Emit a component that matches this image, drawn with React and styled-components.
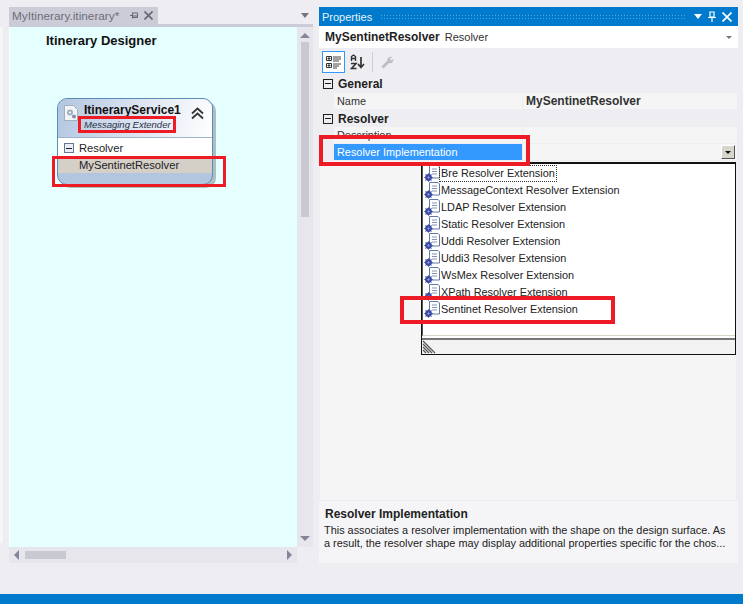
import React from 'react'
import styled, { createGlobalStyle } from 'styled-components'

const GlobalStyle = createGlobalStyle`
  html, body {
    margin: 0;
    padding: 0;
    background: #eeeef2;
    font-family: 'Liberation Sans', Arial, sans-serif;
    font-size: 10.9px;
    color: #1e1e1e;
    overflow: hidden;
  }
`

const Page = styled.div`
  position: relative;
  width: 743px;
  height: 604px;
  display: flex;
  flex-direction: column;
  overflow: hidden;
`

const Workspace = styled.div`
  flex: 1;
  display: flex;
  padding-top: 7px;
`

const EdgeStrip = styled.div`
  width: 3px;
  height: 516px;
  margin: 20px 6px 0 0;
  background: #f6f6f6;
`

const DesignerPane = styled.section`
  width: 304px;
  height: 556px;
  margin-right: 6px;
  display: flex;
  flex-direction: column;
`

const TabRow = styled.div`
  height: 17px;
  display: flex;
  align-items: center;
  justify-content: space-between;
  flex: none;
`

const Tab = styled.div`
  width: 149px;
  height: 17px;
  padding: 0 5px 0 3px;
  box-sizing: border-box;
  background: #ccccd8;
  color: #6d6d7a;
  font-size: 11.8px;
  display: flex;
  align-items: center;
  justify-content: space-between;
`

const TabActions = styled.span`
  display: flex;
  align-items: center;
  gap: 6px;
`

const TabLine = styled.div`
  height: 3px;
  background: #ccccd8;
  flex: none;
`

const DesignerBody = styled.div`
  display: grid;
  grid-template-columns: 288px 16px;
  grid-template-rows: 520px 16px;
`

const Canvas = styled.div`
  background: #e6ffff;
  border-left: 1px solid #f7ffff;
  padding: 6px 0 0 36px;
`

const CanvasTitle = styled.div`
  font-size: 13px;
  font-weight: 700;
  color: #111;
  height: 16px;
  line-height: 16px;
`

const Node = styled.div`
  width: 154px;
  height: 85px;
  margin: 49px 0 0 11px;
  border: 1px solid #5b8db8;
  border-radius: 10px;
  box-shadow: 3px 3px 0 #aebfc0;
  background: #b2c6e0;
  overflow: hidden;
  display: flex;
  flex-direction: column;
`

const NodeHead = styled.div`
  height: 38px;
  flex: none;
  display: flex;
  background: linear-gradient(105deg, #b2c6e0 0%, #dfe6f2 55%, #ffffff 100%);
  border-bottom: 1px solid #9fb4cc;
  position: relative;
`

const NodeIcon = styled.span`
  width: 14px;
  height: 16px;
  margin: 6px 6px 0 6px;
  flex: none;
`

const NodeText = styled.div`
  display: flex;
  flex-direction: column;
  padding-top: 4px;
`

const NodeName = styled.div`
  font-weight: 700;
  font-size: 12px;
  line-height: 14px;
  color: #111;
  white-space: nowrap;
`

const NodeKind = styled.div`
  font-style: italic;
  font-size: 9.5px;
  line-height: 11px;
  margin-top: 2px;
  color: #1f3044;
  white-space: nowrap;
`

const Collapse = styled.svg`
  width: 13px;
  height: 13px;
  position: absolute;
  top: 8px;
  right: 8px;
`

const NodeSection = styled.div`
  height: 20px;
  flex: none;
  background: #fff;
  display: flex;
  align-items: center;
  gap: 5px;
  padding-left: 6px;
  font-size: 11.2px;
`

const NodeItem = styled.div`
  height: 15px;
  flex: none;
  background: #d4d0c8;
  padding-left: 21px;
  line-height: 15px;
  font-size: 11.2px;
  color: #222;
`

const ExpandBox = styled.span`
  width: 8px;
  height: 8px;
  flex: none;
  border: 1px solid ${({ $dark }) => ($dark ? '#1e1e1e' : '#67788c')};
  background: ${({ $dark }) => ($dark ? 'transparent' : '#e7edf4')};
  position: relative;

  &::after {
    content: '';
    position: absolute;
    left: 1px;
    right: 1px;
    top: 3.5px;
    height: 1px;
    background: #1e1e1e;
  }
`

const ScrollBar = styled.div`
  background: #e6e6ec;
  display: flex;
  flex-direction: ${({ $horizontal }) => ($horizontal ? 'row' : 'column')};
  align-items: ${({ $horizontal }) => ($horizontal ? 'center' : 'stretch')};
  justify-content: space-between;
  position: relative;
`

const Thumb = styled.div`
  background: #c9c9d2;
  ${({ $horizontal }) =>
    $horizontal
      ? 'position: absolute; left: 16px; top: 4px; width: 41px; height: 8px;'
      : 'position: absolute; left: 4px; top: 15px; width: 8px; height: 175px;'}
`

const Arrow = styled.span`
  width: 0;
  height: 0;
  flex: none;
  border-style: solid;
  border-color: transparent;
  ${({ $dir }) => ($dir === 'up' ? 'border-width: 0 5px 5px; border-bottom-color: #85859a; margin: 6px 3px 0;' : '')}
  ${({ $dir }) => ($dir === 'down' ? 'border-width: 5px 5px 0; border-top-color: #85859a; margin: 0 3px 6px;' : '')}
  ${({ $dir }) => ($dir === 'left' ? 'border-width: 5px 5px 5px 0; border-right-color: #85859a; margin-left: 5px;' : '')}
  ${({ $dir }) => ($dir === 'right' ? 'border-width: 5px 0 5px 5px; border-left-color: #85859a; margin-right: 5px;' : '')}
`

const Corner = styled.div``

const PropertiesPane = styled.section`
  width: 419px;
  height: 556px;
  display: flex;
  flex-direction: column;
`

const TitleBar = styled.header`
  height: 19px;
  flex: none;
  background: #007acc;
  color: #e8f2fa;
  display: flex;
  align-items: center;
  padding: 0 6px 0 3px;
  gap: 8px;
  font-size: 11px;
`

const Grip = styled.div`
  flex: 1;
  height: 5px;
  background-image: radial-gradient(#5aa8de 0.7px, transparent 0.8px);
  background-size: 3px 3px;
`

const TitleIcons = styled.div`
  display: flex;
  align-items: center;
  gap: 6px;
`

const ObjectRow = styled.div`
  height: 22px;
  flex: none;
  background: #fff;
  display: flex;
  align-items: center;
  gap: 5px;
  padding: 0 6px;
  font-size: 11px;
  position: relative;

  b {
    color: #1e1e1e;
    font-size: 12px;
  }

  span {
    color: #333;
  }

  &::after {
    content: '';
    position: absolute;
    right: 6px;
    top: 10px;
    border-style: solid;
    border-width: 3px 3px 0;
    border-color: #777 transparent transparent;
  }
`

const Toolbar = styled.div`
  height: 27px;
  flex: none;
  display: flex;
  align-items: center;
  padding-left: 3px;
  gap: 2px;
`

const ToolButton = styled.span`
  width: ${({ $active }) => ($active ? '23px' : '21px')};
  height: 22px;
  box-sizing: border-box;
  display: flex;
  align-items: center;
  justify-content: center;
  border: 1px solid ${({ $active }) => ($active ? '#3399ff' : 'transparent')};
  background: ${({ $active }) => ($active ? '#fff' : 'transparent')};
`

const ToolDivider = styled.span`
  width: 1px;
  height: 20px;
  margin: 0 2px;
  background: #ccced8;
`

const Grid = styled.div`
  flex: 1;
  display: flex;
  flex-direction: column;
`

const CategoryRow = styled.div`
  height: 17px;
  flex: none;
  display: flex;
  align-items: center;
  gap: 5px;
  padding-left: 4px;
  margin-bottom: ${({ $spaced }) => ($spaced ? '1px' : '0')};
  font-weight: 700;
  font-size: 12px;
  color: #1e1e1e;
`

const PropRow = styled.div`
  height: 16px;
  flex: none;
  margin: 0 1px 1px 15px;
  display: grid;
  grid-template-columns: 188px 1fr;
  column-gap: 1px;
`

const PropName = styled.div`
  padding-left: 3px;
  line-height: 16px;
  background: ${({ $selected }) => ($selected ? '#3399ff' : '#f5f5f5')};
  color: ${({ $selected }) => ($selected ? '#fff' : '#333')};
`

const PropValue = styled.div`
  padding-left: 3px;
  line-height: 16px;
  background: #f5f5f5;
  font-weight: ${({ $bold }) => ($bold ? 700 : 400)};
  font-size: ${({ $bold }) => ($bold ? '12px' : 'inherit')};
  color: #333;
  position: relative;
`

const ComboButton = styled.span`
  position: absolute;
  right: 2px;
  top: 1px;
  width: 14px;
  height: 14px;
  box-sizing: border-box;
  background: #d8d5cc;
  border: 1px solid;
  border-color: #fff #555 #555 #fff;

  &::after {
    content: '';
    position: absolute;
    left: 3px;
    top: 5px;
    border-style: solid;
    border-width: 3px 3px 0;
    border-color: #111 transparent transparent;
  }
`

const EmptyGrid = styled.div`
  flex: 1;
  margin: 0 2px 1px 1px;
  background: #f5f5f5;
`

const HelpBox = styled.div`
  height: 62px;
  flex: none;
  background: #f5f5f7;
  box-sizing: border-box;
  padding: 6px 5px 0 5px;
  line-height: 13px;
  color: #222;
`

const HelpTitle = styled.div`
  font-weight: 700;
  font-size: 12px;
  margin: 0 0 3px 1px;
  line-height: 14px;
`

const HelpLine = styled.div`
  white-space: nowrap;
`

const Dropdown = styled.div`
  position: absolute;
  left: 421px;
  top: 162px;
  width: 315px;
  height: 193px;
  box-sizing: border-box;
  border: 1px solid #111;
  border-top-width: 2px;
  background: #fff;
  display: flex;
  flex-direction: column;
`

const DropList = styled.div`
  height: 170px;
  flex: none;
  padding: 1px 0 0 1px;
  border-left: 1px solid #555;
  border-bottom: 1px solid #d8d5c8;
`

const DropItem = styled.div`
  height: 17px;
  display: flex;
  align-items: center;
  color: #222;
`

const DropLabel = styled.span`
  padding: 0 1px;
  line-height: 15px;
  outline: ${({ $focused }) => ($focused ? '1px dotted #333' : 'none')};
`

const DropFooter = styled.div`
  flex: 1;
  margin-top: 2px;
  border-top: 2px solid #777;
  background: #f3f3f3;
`

const Redbox = styled.div`
  position: absolute;
  box-sizing: border-box;
  border: ${({ $thick }) => ($thick ? '4px' : '3px')} solid #ed1c24;
  pointer-events: none;
`

const StatusBar = styled.footer`
  height: 10px;
  flex: none;
  background: #007acc;
`

const items = [
  'Bre Resolver Extension',
  'MessageContext Resolver Extension',
  'LDAP Resolver Extension',
  'Static Resolver Extension',
  'Uddi Resolver Extension',
  'Uddi3 Resolver Extension',
  'WsMex Resolver Extension',
  'XPath Resolver Extension',
  'Sentinet Resolver Extension'
]

const annotations = [
  { left: 78, top: 116, width: 98, height: 17 },
  { left: 52, top: 156, width: 174, height: 31 },
  { left: 319, top: 135, width: 211, height: 31, thick: true },
  { left: 400, top: 296, width: 215, height: 28, thick: true }
]

const ExtensionIcon = () => (
  <svg width="16" height="17" viewBox="0 0 16 17" style={{ flex: 'none' }}>
    <path d="M5.5 .5h8.5l1.5 1.5v11h-10z" fill="#fff" stroke="#5f79a8" />
    <path d="M8 4h5M8 6.5h5M8 9h5" stroke="#8493b5" />
    <circle cx="4.5" cy="12.5" r="3.4" fill="#3c4aa6" />
    <path d="M4.5 8.3v8.4M.3 12.5h8.4M1.5 9.5l6 6M7.5 9.5l-6 6" stroke="#3c4aa6" />
    <circle cx="4.5" cy="12.5" r="1" fill="#aab4e4" />
  </svg>
)

const App = () => (
  <Page>
    <GlobalStyle />
    <Workspace>
      <EdgeStrip />

      <DesignerPane>
        <TabRow>
          <Tab>
            MyItinerary.itinerary*
            <TabActions>
              <svg width="8" height="9" viewBox="0 0 8 9">
                <path d="M0 4.5h2M2.5 1.5v6M2.5 2h5v4.5h-5M2.5 5h5" fill="none" stroke="#666674" />
              </svg>
              <svg width="9" height="9" viewBox="0 0 9 9">
                <path d="M.5.5l8 8M8.5.5l-8 8" stroke="#666674" strokeWidth="1.6" />
              </svg>
            </TabActions>
          </Tab>
          <svg width="8" height="5" viewBox="0 0 8 5" style={{ marginRight: 4 }}>
            <path d="M0 0h8L4 5z" fill="#74747f" />
          </svg>
        </TabRow>
        <TabLine />

        <DesignerBody>
          <Canvas>
            <CanvasTitle>Itinerary Designer</CanvasTitle>
            <Node>
              <NodeHead>
                <NodeIcon>
                  <svg width="14" height="16" viewBox="0 0 14 16">
                    <path d="M.5.5h9l4 4v11H.5z" fill="#f2f4f8" stroke="#a4afbd" />
                    <circle cx="6" cy="7.5" r="3" fill="#9fb0c4" />
                    <circle cx="6" cy="7.5" r="1" fill="#fff" />
                    <circle cx="10" cy="11.5" r="2" fill="#7f93ab" />
                  </svg>
                </NodeIcon>
                <NodeText>
                  <NodeName>ItineraryService1</NodeName>
                  <NodeKind>Messaging Extender</NodeKind>
                </NodeText>
                <Collapse viewBox="0 0 13 13">
                  <path d="M1 6.5l5.5-5 5.5 5M1 11.5l5.5-5 5.5 5" fill="none" stroke="#333" strokeWidth="1.7" />
                </Collapse>
              </NodeHead>
              <NodeSection>
                <ExpandBox />
                Resolver
              </NodeSection>
              <NodeItem>MySentinetResolver</NodeItem>
            </Node>
          </Canvas>

          <ScrollBar>
            <Arrow $dir="up" />
            <Thumb />
            <Arrow $dir="down" />
          </ScrollBar>

          <ScrollBar $horizontal>
            <Arrow $dir="left" />
            <Thumb $horizontal />
            <Arrow $dir="right" />
          </ScrollBar>
          <Corner />
        </DesignerBody>
      </DesignerPane>

      <PropertiesPane>
        <TitleBar>
          Properties
          <Grip />
          <TitleIcons>
            <svg width="8" height="5" viewBox="0 0 8 5">
              <path d="M0 0h8L4 5z" fill="#fff" />
            </svg>
            <svg width="8" height="11" viewBox="0 0 8 11">
              <path d="M2 1h4v5H2zM0 6.5h8M4 7v4" fill="none" stroke="#fff" strokeWidth="1.2" />
            </svg>
            <svg width="10" height="10" viewBox="0 0 10 10">
              <path d="M.5.5l9 9M9.5.5l-9 9" stroke="#fff" strokeWidth="1.7" />
            </svg>
          </TitleIcons>
        </TitleBar>

        <ObjectRow>
          <b>MySentinetResolver</b>
          <span>Resolver</span>
        </ObjectRow>

        <Toolbar>
          <ToolButton $active>
            <svg width="15" height="14" viewBox="0 0 15 14">
              <path d="M.5 1.5h5v4h-5zM.5 8.5h5v4h-5z" fill="none" stroke="#333" />
              <path d="M1.5 3.5h3M3 2v3M1.5 10.5h3M3 9v3" stroke="#333" />
              <path d="M7 2h8M7 4h8M7 6h6M7 9h8M7 11h6M7 13h4" stroke="#444" />
            </svg>
          </ToolButton>
          <ToolButton>
            <svg width="16" height="16" viewBox="0 0 16 16">
              <path d="M1.5 7V2.5L3.5 1l2 1.5V7M1.5 4.5h4" fill="none" stroke="#333" strokeWidth="1.4" />
              <path d="M1 9.5h5L1.5 14.5h5" fill="none" stroke="#333" strokeWidth="1.6" />
              <path d="M11 3v10M8 10l3 3.5 3-3.5" fill="none" stroke="#333" strokeWidth="1.7" />
            </svg>
          </ToolButton>
          <ToolDivider />
          <ToolButton>
            <svg width="14" height="14" viewBox="0 0 14 14">
              <path d="M1.5 12.5l6-6" stroke="#bdbdc2" strokeWidth="3" />
              <path d="M7 7.5a3.5 3.5 0 0 1 4-5.5L9 4l1 1.5L12.5 4A3.5 3.5 0 0 1 7 7.5z" fill="#bdbdc2" />
            </svg>
          </ToolButton>
        </Toolbar>

        <Grid>
          <CategoryRow $spaced>
            <ExpandBox $dark />
            General
          </CategoryRow>
          <PropRow>
            <PropName>Name</PropName>
            <PropValue $bold>MySentinetResolver</PropValue>
          </PropRow>
          <CategoryRow>
            <ExpandBox $dark />
            Resolver
          </CategoryRow>
          <PropRow>
            <PropName>Description</PropName>
            <PropValue />
          </PropRow>
          <PropRow>
            <PropName $selected>Resolver Implementation</PropName>
            <PropValue>
              <ComboButton />
            </PropValue>
          </PropRow>
          <EmptyGrid />
        </Grid>

        <HelpBox>
          <HelpTitle>Resolver Implementation</HelpTitle>
          <HelpLine>This associates a resolver implementation with the shape on the design surface. As</HelpLine>
          <HelpLine>a result, the resolver shape may display additional properties specific for the chos...</HelpLine>
        </HelpBox>
      </PropertiesPane>
    </Workspace>

    <Dropdown>
      <DropList>
        {items.map((item, i) => (
          <DropItem key={item}>
            <ExtensionIcon />
            <DropLabel $focused={i === 0}>{item}</DropLabel>
          </DropItem>
        ))}
      </DropList>
      <DropFooter>
        <svg width="14" height="14" viewBox="0 0 14 14" style={{ display: 'block' }}>
          <path d="M1 1l12 12M1 4l9 9M1 7l6 6M1 10l3 3" stroke="#555" strokeWidth="1.2" />
        </svg>
      </DropFooter>
    </Dropdown>

    {annotations.map(({ thick, ...box }) => (
      <Redbox key={`${box.left}-${box.top}`} $thick={thick} style={box} />
    ))}

    <StatusBar />
  </Page>
)

export default App
